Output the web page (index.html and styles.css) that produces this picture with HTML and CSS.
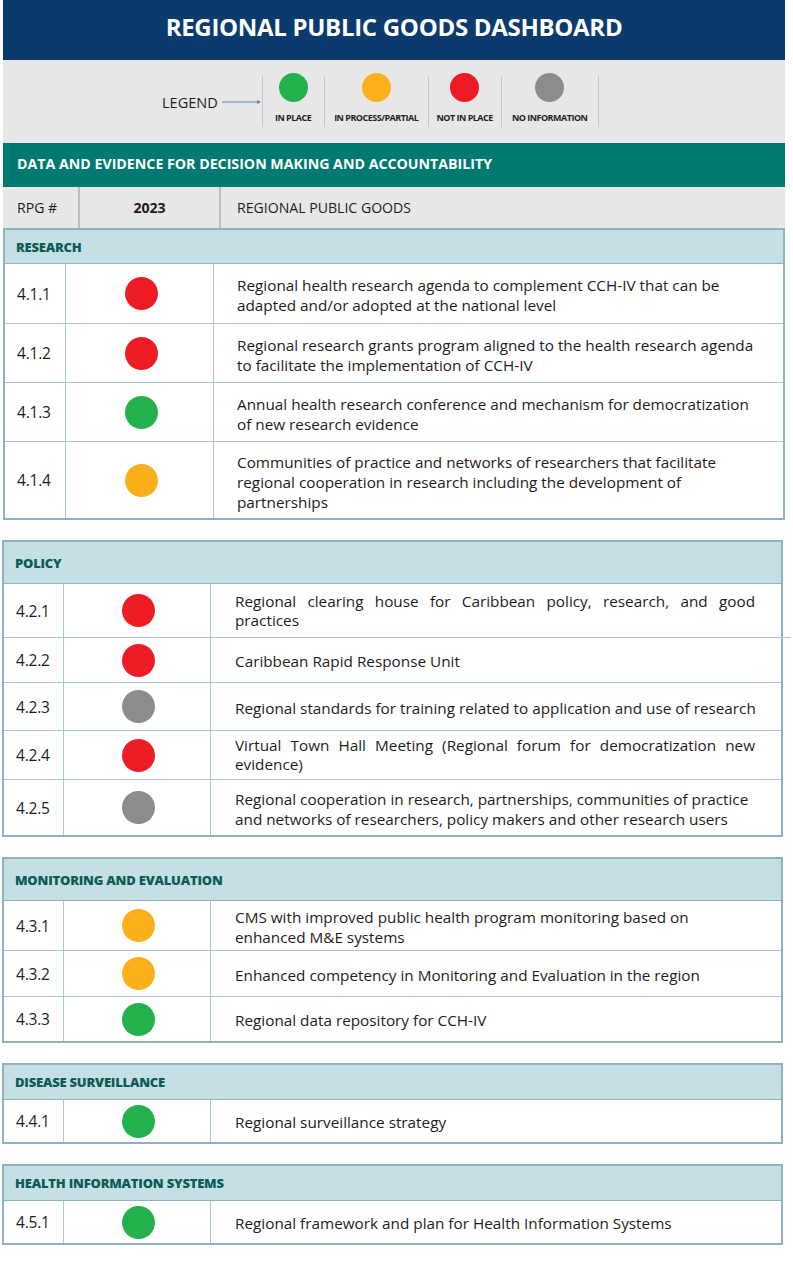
FILE: index.html
```html
<!DOCTYPE html>
<html lang="en">
<head>
<meta charset="utf-8">
<title>Regional Public Goods Dashboard</title>
<link rel="stylesheet" href="styles.css">
</head>
<body>
<div class="page">
  <header class="title-bar"><h1>REGIONAL PUBLIC GOODS DASHBOARD</h1></header>

  <div class="top">
    <div class="legend">
      <span class="legend-label">LEGEND</span>
      <svg class="legend-arrow" width="40" height="8" viewBox="0 0 40 8"><line x1="0" y1="4" x2="38" y2="4" stroke="#5d87b5" stroke-width="1"/><path d="M35 2 L39 4 L35 6 Z" fill="#5d87b5"/></svg>
      <div class="legend-item w62"><span class="dot green lg"></span><span class="legend-text">IN PLACE</span></div>
      <div class="legend-item w104"><span class="dot orange lg"></span><span class="legend-text">IN PROCESS/PARTIAL</span></div>
      <div class="legend-item w73"><span class="dot red lg"></span><span class="legend-text">NOT IN PLACE</span></div>
      <div class="legend-item w97 last"><span class="dot gray lg"></span><span class="legend-text">NO INFORMATION</span></div>
    </div>
    <div class="theme-bar">DATA AND EVIDENCE FOR DECISION MAKING AND ACCOUNTABILITY</div>
    <div class="col-head">
      <div class="ch ch-num">RPG #</div>
      <div class="ch ch-year">2023</div>
      <div class="ch ch-goods">REGIONAL PUBLIC GOODS</div>
    </div>
  </div>

  <section class="block first">
    <div class="block-head h34">RESEARCH</div>
    <div class="row h59"><div class="num">4.1.1</div><div class="status"><span class="dot red"></span></div><div class="desc">Regional health research agenda to complement CCH-IV that can be adapted and/or adopted at the national level</div></div>
    <div class="row h59"><div class="num">4.1.2</div><div class="status"><span class="dot red"></span></div><div class="desc">Regional research grants program aligned to the health research agenda to facilitate the implementation of CCH-IV</div></div>
    <div class="row h59"><div class="num">4.1.3</div><div class="status"><span class="dot green"></span></div><div class="desc">Annual health research conference and mechanism for democratization of new research evidence</div></div>
    <div class="row h77"><div class="num">4.1.4</div><div class="status"><span class="dot orange"></span></div><div class="desc">Communities of practice and networks of researchers that facilitate regional cooperation in research including the development of partnerships</div></div>
  </section>

  <section class="block">
    <div class="block-head h42">POLICY</div>
    <div class="row h53 overhang"><div class="num">4.2.1</div><div class="status"><span class="dot red"></span></div><div class="desc justify">Regional clearing house for Caribbean policy, research, and good practices</div></div>
    <div class="row h45"><div class="num">4.2.2</div><div class="status"><span class="dot red"></span></div><div class="desc">Caribbean Rapid Response Unit</div></div>
    <div class="row h48"><div class="num">4.2.3</div><div class="status"><span class="dot gray"></span></div><div class="desc">Regional standards for training related to application and use of research</div></div>
    <div class="row h49"><div class="num">4.2.4</div><div class="status"><span class="dot red"></span></div><div class="desc justify">Virtual Town Hall Meeting (Regional forum for democratization new evidence)</div></div>
    <div class="row h56"><div class="num">4.2.5</div><div class="status"><span class="dot gray"></span></div><div class="desc">Regional cooperation in research, partnerships, communities of practice and networks of researchers, policy makers and other research users</div></div>
  </section>

  <section class="block">
    <div class="block-head h42">MONITORING AND EVALUATION</div>
    <div class="row h49"><div class="num">4.3.1</div><div class="status"><span class="dot orange"></span></div><div class="desc">CMS with improved public health program monitoring based on enhanced M&amp;E systems</div></div>
    <div class="row h46"><div class="num">4.3.2</div><div class="status"><span class="dot orange"></span></div><div class="desc">Enhanced competency in Monitoring and Evaluation in the region</div></div>
    <div class="row h45"><div class="num">4.3.3</div><div class="status"><span class="dot green"></span></div><div class="desc">Regional data repository for CCH-IV</div></div>
  </section>

  <section class="block">
    <div class="block-head h35">DISEASE SURVEILLANCE</div>
    <div class="row h42"><div class="num">4.4.1</div><div class="status"><span class="dot green"></span></div><div class="desc">Regional surveillance strategy</div></div>
  </section>

  <section class="block">
    <div class="block-head h35">HEALTH INFORMATION SYSTEMS</div>
    <div class="row h42"><div class="num">4.5.1</div><div class="status"><span class="dot green"></span></div><div class="desc">Regional framework and plan for Health Information Systems</div></div>
  </section>
</div>
</body>
</html>
```

FILE: styles.css
```css
* { box-sizing: border-box; }

body {
  margin: 0;
  background: #ffffff;
  font-family: "Open Sans", "Noto Sans", "Liberation Sans", sans-serif;
  color: #1f1b1c;
}

.page {
  width: 782px;
  margin-left: 3px;
  padding-bottom: 34px;
}

/* Title */
.title-bar {
  height: 60px;
  background: #0b3b6d;
  display: flex;
  align-items: center;
  justify-content: center;
  padding-bottom: 7px;
}
.title-bar h1 {
  margin: 0;
  color: #ffffff;
  font-size: 24px;
  font-weight: 700;
  letter-spacing: -0.3px;
}

/* Legend + header area */
.top { background: #e7e7e7; }

.legend {
  height: 83px;
  display: flex;
  align-items: center;
  padding-left: 159px;
}
.legend-label {
  font-size: 14.5px;
  color: #1e1e1e;
  margin-top: 1px;
}
.legend-arrow {
  margin-left: 4px;
  margin-top: 1px;
}
.legend-item {
  height: 51px;
  display: flex;
  flex-direction: column;
  align-items: center;
  border-left: 1px solid #b8cad8;
}
.legend-item.last { border-right: 1px solid #b8cad8; }
.w62 { width: 62px; }
.w104 { width: 104px; }
.w73 { width: 73px; }
.w97 { width: 98px; }
.legend-item .dot { margin-top: -3px; }
.legend-text {
  margin-top: 11px;
  font-size: 9px;
  line-height: 10px;
  font-weight: 700;
  letter-spacing: -0.5px;
  color: #1e1e1e;
  white-space: nowrap;
}

.dot {
  display: block;
  width: 33px;
  height: 33px;
  border-radius: 50%;
}
.dot.lg { width: 29px; height: 29px; }
.dot.green { background: #22b14c; }
.dot.orange { background: #fbb01b; }
.dot.red { background: #ed1c24; }
.dot.gray { background: #8c8c8d; }

.theme-bar {
  height: 44px;
  background: #007a70;
  color: #ffffff;
  font-weight: 700;
  font-size: 14.2px;
  display: flex;
  align-items: center;
  padding-left: 14px;
  padding-bottom: 3px;
}

.col-head {
  display: grid;
  grid-template-columns: 75px 141px 1fr;
  height: 41px;
  font-size: 14.1px;
}
.ch {
  display: flex;
  align-items: center;
}
.ch-num { padding-left: 14px; }
.ch-year {
  justify-content: center;
  font-weight: 700;
  border-left: 2px solid #bdbdbd;
}
.ch-goods {
  padding-left: 16px;
  border-left: 2px solid #bdbdbd;
}

/* Sections */
.block {
  border: 2px solid #8fb2c1;
  margin-top: 20px;
  width: 781px;
  margin-left: -1px;
}
.block.first {
  margin-top: 0;
  width: 782px;
  margin-left: 0;
}
.block-head {
  background: #c4e0e4;
  color: #0c5b56;
  font-weight: 800;
  font-size: 13px;
  letter-spacing: -0.2px;
  padding-left: 11px;
  display: flex;
  align-items: center;
  border-bottom: 1px solid #8fb2c1;
}

.row {
  display: grid;
  grid-template-columns: 60px 147px 1fr;
  border-top: 1px solid #a9c6d3;
  position: relative;
}
.block-head + .row { border-top: 0; }
.block.first .row { grid-template-columns: 61px 148px 1fr; }

/* stray rule that runs past the box edge in the source artwork */
.row.overhang::after {
  content: "";
  position: absolute;
  left: 100%;
  bottom: -1px;
  width: 10px;
  height: 1px;
  background: #a9c6d3;
}

.num {
  display: flex;
  align-items: center;
  padding-left: 12px;
  font-size: 15.5px;
  letter-spacing: -0.2px;
  border-right: 1px solid #a9c6d3;
}
.status {
  display: flex;
  align-items: center;
  justify-content: center;
  padding-left: 3px;
  border-right: 1px solid #a9c6d3;
}
.desc {
  display: flex;
  align-items: center;
  padding: 2px 18px 0 24px;
  font-size: 15.3px;
  line-height: 20px;
}
.block.first .desc { padding-left: 23px; padding-right: 20px; padding-top: 3px; }
.desc.justify {
  display: block;
  text-align: justify;
  align-self: center;
  padding-top: 0;
  padding-right: 26px;
  line-height: 19px;
}

/* Row heights */
.h34 { height: 34px; }
.h35 { height: 35px; }
.h42 { height: 42px; }
.h45 { height: 45px; }
.h46 { height: 46px; }
.h48 { height: 48px; }
.h49 { height: 49px; }
.h53 { height: 53px; }
.h56 { height: 56px; }
.h59 { height: 59px; }
.h77 { height: 77px; }
```
